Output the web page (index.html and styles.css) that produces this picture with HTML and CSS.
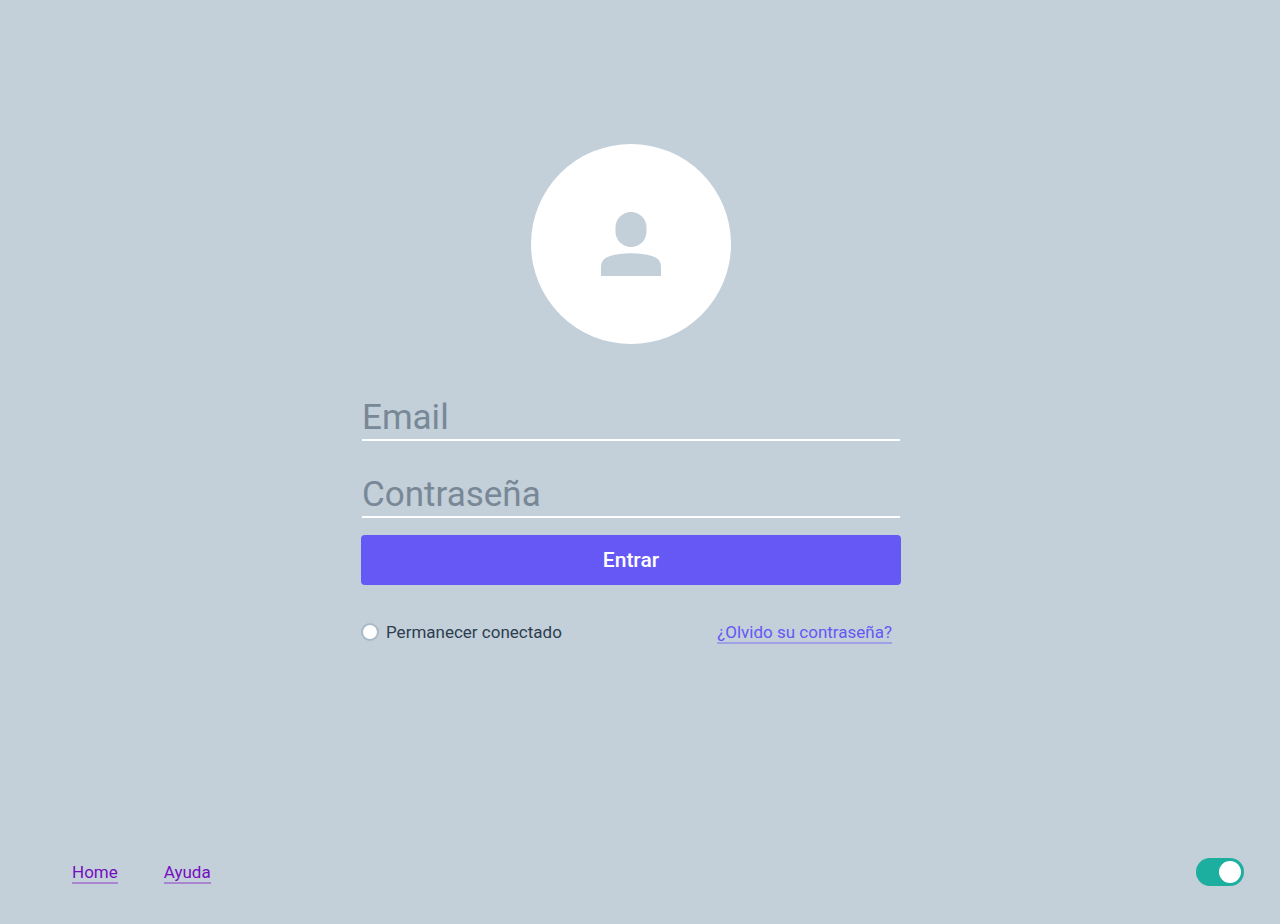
FILE: index.html
```html
<!DOCTYPE html>
<html lang="es">
<head>
<meta charset="utf-8">
<meta name="viewport" content="width=device-width, initial-scale=1">
<title>Entrar</title>
<link rel="stylesheet" href="styles.css">
</head>
<body class="page">
<main class="login">
  <div class="avatar">
    <svg class="avatar-icon" viewBox="0 0 60 64" aria-hidden="true">
      <path d="M30 0C38.600 0 45.500 6.900 45.500 15.500V19.500C45.500 28.100 38.600 35 30 35S14.500 28.100 14.500 19.500V15.500C14.500 6.900 21.400 0 30 0Z"/>
      <path d="M0 64V54.500C0 50 2.600 46.600 6.600 44.900C13 42.400 21 41.200 30 41.200S47 42.400 53.400 44.900C57.400 46.600 60 50 60 54.500V64Z"/>
    </svg>
  </div>
  <form class="form">
    <input class="field" type="email" placeholder="Email" aria-label="Email">
    <input class="field" type="password" placeholder="Contraseña" aria-label="Contraseña">
    <button class="submit" type="submit">Entrar</button>
    <div class="options">
      <label class="remember"><input class="remember-input" type="radio" name="remember"><span>Permanecer conectado</span></label>
      <a class="link" href="#recuperar">¿Olvido su contraseña?</a>
    </div>
  </form>
</main>
<footer class="footer">
  <nav class="nav">
    <a class="link link-nav" href="#home">Home</a>
    <a class="link link-nav" href="#ayuda">Ayuda</a>
  </nav>
  <input class="toggle" type="checkbox" role="switch" aria-label="Tema" checked>
</footer>
</body>
</html>
```
FILE: styles.css
```css
* {
  box-sizing: border-box;
}

.page {
  display: flex;
  flex-direction: column;
  min-height: 100vh;
  margin: 0;
  background: #c3cfd9;
  color: #2c3e4f;
  font: 17px/24px Roboto, "Liberation Sans", sans-serif;
}

.login {
  display: flex;
  flex: 1;
  flex-direction: column;
  align-items: center;
  padding: 144px 18px 48px 0;
}

.avatar {
  display: flex;
  align-items: center;
  justify-content: center;
  width: 200px;
  height: 200px;
  border-radius: 50%;
  background: #fff;
}

.avatar-icon {
  width: 60px;
  height: 64px;
  fill: #c3cfd9;
}

.form {
  display: flex;
  flex-direction: column;
  width: 100%;
  max-width: 540px;
  margin-top: 47px;
}

.field {
  height: 50px;
  margin: 0 1px 27px;
  padding: 4px 0 0;
  border: 0;
  border-bottom: 2px solid #fff;
  outline: 0;
  background: transparent;
  color: #2c3e4f;
  font: 35px/44px Roboto, "Liberation Sans", sans-serif;
}

.field + .field {
  margin-bottom: 17px;
}

.field::placeholder {
  color: #788896;
  opacity: 1;
}

.submit {
  height: 50px;
  padding: 0;
  border: 0;
  border-radius: 4px;
  background: #6558f5;
  color: #fff;
  font: 500 21px/24px Roboto, "Liberation Sans", sans-serif;
  cursor: pointer;
}

.options {
  display: flex;
  align-items: flex-start;
  justify-content: space-between;
  margin-top: 35px;
  padding-right: 9px;
}

.remember {
  display: flex;
  align-items: center;
  gap: 7px;
}

.remember-input {
  width: 18px;
  height: 18px;
  margin: 0;
  appearance: none;
  border: 2px solid #a9b9c8;
  border-radius: 50%;
  background: #fff;
}

.remember-input:checked {
  background: #6558f5;
}

.link {
  padding-top: 2px;
  border-bottom: 2px solid #a19fe5;
  color: #6558f5;
  line-height: 20px;
  text-decoration: none;
}

.link-nav {
  border-color: #a985cf;
  color: #7410bd;
}

.footer {
  display: flex;
  align-items: center;
  justify-content: space-between;
  padding: 0 36px 38px 72px;
}

.nav {
  display: flex;
  gap: 46px;
}

.toggle {
  display: flex;
  align-items: center;
  width: 48px;
  height: 28px;
  margin: 0;
  padding: 3px;
  appearance: none;
  border-radius: 14px;
  background: #8a9aa8;
}

.toggle::before {
  width: 22px;
  height: 22px;
  border-radius: 50%;
  background: #fff;
  content: "";
}

.toggle:checked {
  justify-content: flex-end;
  background: #1caf9f;
}
```
